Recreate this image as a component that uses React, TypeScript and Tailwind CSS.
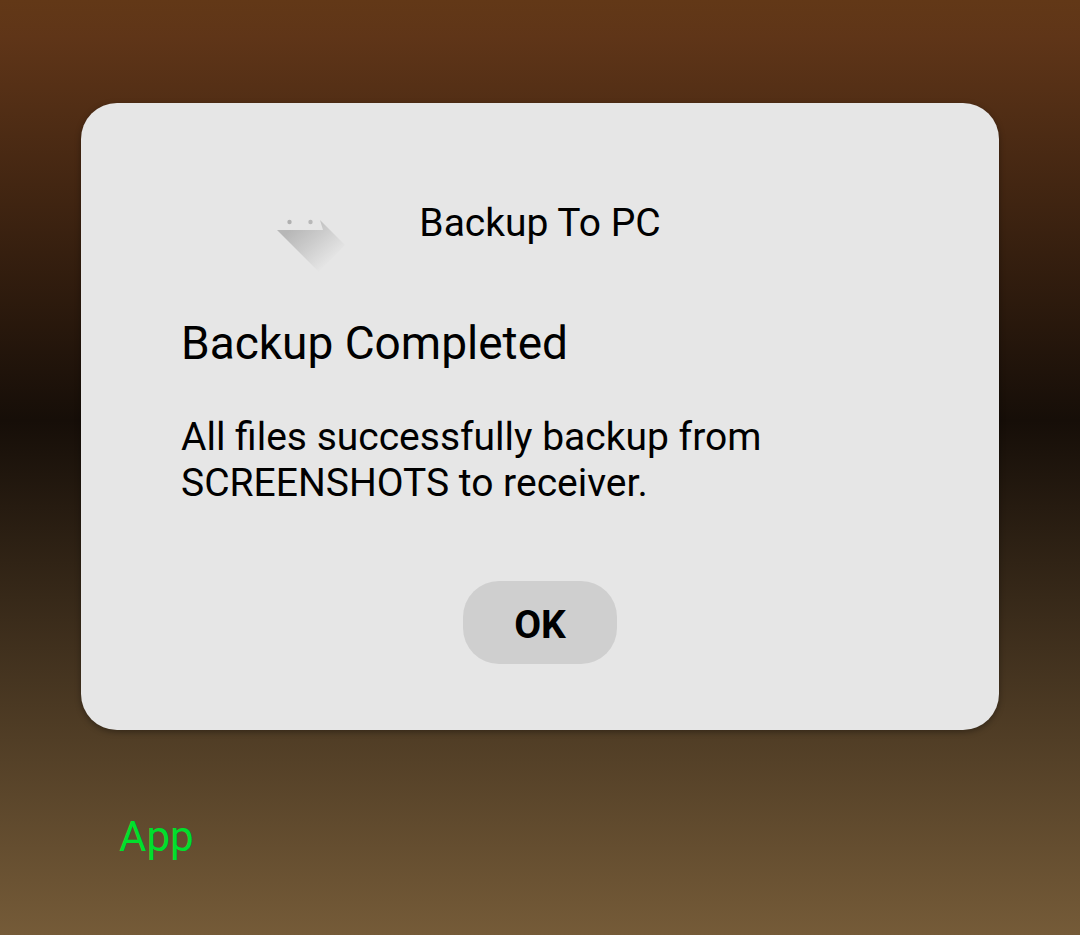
function AppIcon() {
  return (
    <svg viewBox="0 0 68 54" className="mt-[18px] mr-[74px] h-[54px] w-[68px] justify-self-end" aria-hidden="true">
      <defs>
        <linearGradient id="fold" gradientUnits="userSpaceOnUse" x1="22" y1="4" x2="56" y2="42">
          <stop offset="0" stopColor="#b7b7b7" />
          <stop offset="0.45" stopColor="#cbcbcb" />
          <stop offset="1" stopColor="#e6e6e6" />
        </linearGradient>
      </defs>
      <path d="M0 12H46L43 2L68 27L42 54Z" fill="url(#fold)" />
      <circle cx="12.5" cy="4" r="2.2" fill="#b0b0b0" />
      <circle cx="33.5" cy="4" r="2.2" fill="#b8b8b8" />
    </svg>
  );
}

export default function App() {
  return (
    <main className="min-h-screen bg-[linear-gradient(to_bottom,#623817_0%,#5f3518_4%,#160e08_45%,#755b38_100%)] px-[81px] pt-[103px] font-[Roboto,sans-serif] text-black">
      <section
        role="dialog"
        aria-labelledby="dialog-title"
        className="flex flex-col rounded-[36px] bg-[#e6e6e6] px-[100px] pt-[97px] pb-[66px] shadow-[0_2px_6px_rgba(0,0,0,0.35)]"
      >
        <header className="grid grid-cols-[1fr_auto_1fr] items-start">
          <AppIcon />
          <h1 id="dialog-title" className="text-[39px] leading-[46px]">Backup To PC</h1>
        </header>
        <h2 className="mt-[44px] text-[46px] leading-[54px]">Backup Completed</h2>
        <p className="mt-[44px] text-[39px] leading-[46px]">
          All files successfully backup from SCREENSHOTS to receiver.
        </p>
        <button
          type="button"
          className="mt-[75px] w-[154px] self-center rounded-[36px] bg-[#cfcfcf] pt-[21px] pb-[16px] text-[39px] leading-[46px] font-bold"
        >
          OK
        </button>
      </section>
      <p className="mt-[82px] px-[38px] pb-[30px] text-[42px] leading-[50px] text-[#00df2c]">App</p>
    </main>
  );
}
